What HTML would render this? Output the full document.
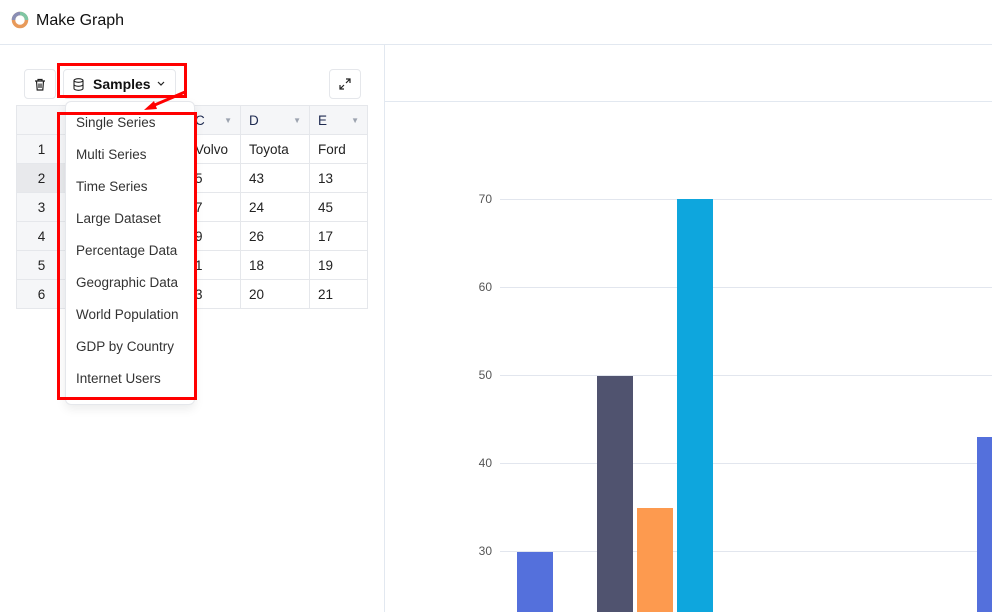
<!DOCTYPE html>
<html><head><style>
body{margin:0;width:992px;height:612px;overflow:hidden;background:#fff;font-family:"Liberation Sans",sans-serif;position:relative;color:#1f2937}
.a{position:absolute}
.hdr{left:0;top:0;width:992px;height:44px;border-bottom:1px solid #e2e8f0}
.btn{border:1px solid #e5e7eb;border-radius:4px;background:#fff}
table{border-collapse:collapse;font-size:13.5px}
td{border:1px solid #e5e7eb;height:28px;padding:0 8px;color:#222}
.rn{background:#f5f6f8;text-align:center;width:33px}
.hd{background:#f5f6f8;color:#1e2a50}
.hd div{display:flex;justify-content:space-between;align-items:center}
.car{color:#9ca3af;font-size:8px}
.grid{left:500px;width:492px;height:1px;background:#e2e6ee}
.yl{left:460px;width:32px;text-align:right;font-size:12px;color:#555}
.menu div{height:32px;line-height:32px;font-size:13.5px;color:#333;padding-left:10px}
</style></head><body>
<div class="a hdr"></div>
<svg class="a" style="left:11px;top:11px" width="18" height="18" viewBox="0 0 18 18"><circle cx="9" cy="9" r="6.5" fill="none" stroke="#e89a5a" stroke-width="3.5"/><path d="M9 2.5 A6.5 6.5 0 0 1 15.5 9" fill="none" stroke="#7fc6a4" stroke-width="3.5"/><path d="M2.5 9 A6.5 6.5 0 0 1 9 2.5" fill="none" stroke="#8a8fb5" stroke-width="3.5"/></svg>
<div class="a" style="left:36px;top:12px;font-size:16px;color:#111">Make Graph</div>
<div class="a" style="left:384px;top:45px;width:1px;height:567px;background:#e2e8f0"></div>
<div class="a" style="left:385px;top:101px;width:607px;height:1px;background:#e2e8f0"></div>

<div class="a btn" style="left:24px;top:69px;width:30px;height:28px;text-align:center;line-height:28px;font-size:13px">
<svg width="12" height="13" viewBox="0 0 12 13" style="vertical-align:middle"><path d="M1 3h10M4 3V1.5h4V3M2.5 3l.7 9h5.6l.7-9M5 5.5v4.5M7 5.5v4.5" fill="none" stroke="#222" stroke-width="1.2"/></svg></div>
<div class="a btn" style="left:63px;top:69px;width:111px;height:28px;line-height:28px;font-size:14px;font-weight:bold;color:#111">
<svg style="position:absolute;left:9px;top:8px" width="11" height="13" viewBox="0 0 11 13"><ellipse cx="5.5" cy="2.5" rx="4.5" ry="1.8" fill="none" stroke="#222" stroke-width="1.1"/><path d="M1 2.5v8c0 1 2 1.8 4.5 1.8s4.5-.8 4.5-1.8v-8M1 6.5c0 1 2 1.8 4.5 1.8s4.5-.8 4.5-1.8" fill="none" stroke="#222" stroke-width="1.1"/></svg>
<span style="position:absolute;left:29px">Samples</span>
<svg style="position:absolute;left:93px;top:11px" width="8" height="6" viewBox="0 0 8 6"><path d="M1 1l3 3 3-3" fill="none" stroke="#222" stroke-width="1.2"/></svg></div>
<div class="a btn" style="left:329px;top:69px;width:30px;height:28px"><svg style="position:absolute;left:9px;top:8px" width="12" height="12" viewBox="0 0 12 12"><path d="M7 1h4v4M11 1L7 5M5 11H1V7M1 11l4-4" fill="none" stroke="#222" stroke-width="1.2"/></svg></div>

<table class="a" style="left:16px;top:105px">
<tr><td class="rn hd"></td><td class="hd" style="width:103px"></td><td class="hd" style="width:37px"><div><span>C</span><span class="car">▼</span></div></td><td class="hd" style="width:52px"><div><span>D</span><span class="car">▼</span></div></td><td class="hd" style="width:41px"><div><span>E</span><span class="car">▼</span></div></td></tr>
<tr><td class="rn">1</td><td></td><td>Volvo</td><td>Toyota</td><td>Ford</td></tr>
<tr><td class="rn" style="background:#e8e9ec">2</td><td></td><td>5</td><td>43</td><td>13</td></tr>
<tr><td class="rn">3</td><td></td><td>7</td><td>24</td><td>45</td></tr>
<tr><td class="rn">4</td><td></td><td>9</td><td>26</td><td>17</td></tr>
<tr><td class="rn">5</td><td></td><td>1</td><td>18</td><td>19</td></tr>
<tr><td class="rn">6</td><td></td><td>3</td><td>20</td><td>21</td></tr>
</table>

<div class="a menu" style="left:65px;top:101px;width:130px;height:304px;background:#fff;border:1px solid #e5e7eb;border-radius:6px;box-shadow:0 4px 10px rgba(0,0,0,.08);padding-top:5px;box-sizing:border-box">
<div>Single Series</div><div>Multi Series</div><div>Time Series</div><div>Large Dataset</div><div>Percentage Data</div><div>Geographic Data</div><div>World Population</div><div>GDP by Country</div><div>Internet Users</div></div>
<div class="a" style="left:57px;top:112px;width:134px;height:282px;border:3px solid #f00"></div>
<div class="a" style="left:57px;top:63px;width:124px;height:29px;border:3px solid #f00"></div>
<svg class="a" style="left:140px;top:88px" width="50" height="26"><path d="M45 4L10 19" stroke="#f00" stroke-width="3"/><path d="M4 22l10-9 3 8z" fill="#f00"/></svg>

<div class="a grid" style="top:199px"></div><div class="a yl" style="top:192px">70</div>
<div class="a grid" style="top:287px"></div><div class="a yl" style="top:280px">60</div>
<div class="a grid" style="top:375px"></div><div class="a yl" style="top:368px">50</div>
<div class="a grid" style="top:463px"></div><div class="a yl" style="top:456px">40</div>
<div class="a grid" style="top:551px"></div><div class="a yl" style="top:544px">30</div>
<div class="a" style="left:517px;top:552px;width:36px;height:60px;background:#5470dc"></div>
<div class="a" style="left:597px;top:376px;width:36px;height:236px;background:#50536f"></div>
<div class="a" style="left:637px;top:508px;width:36px;height:104px;background:#fd9a4f"></div>
<div class="a" style="left:677px;top:199px;width:36px;height:413px;background:#0ea6dd"></div>
<div class="a" style="left:977px;top:437px;width:15px;height:175px;background:#5470dc"></div>
</body></html>
